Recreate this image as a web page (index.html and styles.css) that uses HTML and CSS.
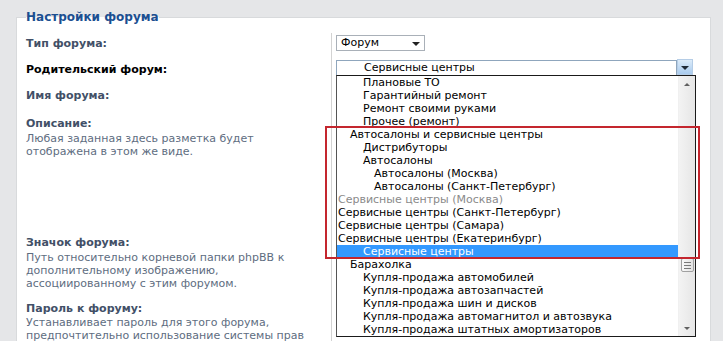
FILE: index.html
```html
<!DOCTYPE html>
<html lang="ru">
<head>
<meta charset="utf-8">
<title>Настройки форума</title>
<link rel="stylesheet" href="styles.css">
</head>
<body>
<fieldset class="panel">
  <legend class="legend">Настройки форума</legend>

  <dl class="row row-short">
    <dt class="term term-short"><span class="label">Тип форума:</span></dt>
    <dd class="field field-type">
      <div class="select select-small"><span class="select-text">Форум</span><span class="caret"></span></div>
    </dd>
  </dl>

  <dl class="row row-short">
    <dt class="term term-short"><span class="label label-active">Родительский форум:</span></dt>
    <dd class="field field-parent">
      <div class="combo">
        <div class="select select-wide"><span class="select-text indent-2">Сервисные центры</span></div>
        <div class="combo-button"><span class="caret caret-dark"></span></div>

        <div class="dropdown">
          <ul class="options">
            <li class="option indent-2">Плановые ТО</li>
            <li class="option indent-2">Гарантийный ремонт</li>
            <li class="option indent-2">Ремонт своими руками</li>
            <li class="option indent-2">Прочее (ремонт)</li>
            <li class="option indent-1">Автосалоны и сервисные центры</li>
            <li class="option indent-2">Дистрибуторы</li>
            <li class="option indent-2">Автосалоны</li>
            <li class="option indent-3">Автосалоны (Москва)</li>
            <li class="option indent-3">Автосалоны (Санкт-Петербург)</li>
            <li class="option indent-0 option-disabled">Сервисные центры (Москва)</li>
            <li class="option indent-0">Сервисные центры (Санкт-Петербург)</li>
            <li class="option indent-0">Сервисные центры (Самара)</li>
            <li class="option indent-0">Сервисные центры (Екатеринбург)</li>
            <li class="option indent-2 option-selected">Сервисные центры</li>
            <li class="option indent-1">Барахолка</li>
            <li class="option indent-2">Купля-продажа автомобилей</li>
            <li class="option indent-2">Купля-продажа автозапчастей</li>
            <li class="option indent-2">Купля-продажа шин и дисков</li>
            <li class="option indent-2">Купля-продажа автомагнитол и автозвука</li>
            <li class="option indent-2">Купля-продажа штатных амортизаторов</li>
          </ul>
          <div class="scrollbar">
            <div class="scroll-btn"><span class="arrow-up"></span></div>
            <div class="scroll-track">
              <div class="scroll-thumb"><span class="grip"></span><span class="grip"></span><span class="grip"></span></div>
            </div>
            <div class="scroll-btn"><span class="arrow-down"></span></div>
          </div>
        </div>
      </div>
    </dd>
  </dl>

  <dl class="row row-short">
    <dt class="term term-short"><span class="label">Имя форума:</span></dt>
    <dd class="field"><div class="input"></div></dd>
  </dl>

  <dl class="row row-desc">
    <dt class="term term-tall">
      <span class="label">Описание:</span>
      <span class="desc">Любая заданная здесь разметка будет отображена в этом же виде.</span>
    </dt>
    <dd class="field"></dd>
  </dl>

  <dl class="row row-icon">
    <dt class="term term-tall">
      <span class="label">Значок форума:</span>
      <span class="desc">Путь относительно корневой папки phpBB к дополнительному изображению, ассоциированному с этим форумом.</span>
    </dt>
    <dd class="field"></dd>
  </dl>

  <dl class="row row-pass">
    <dt class="term term-tall">
      <span class="label">Пароль к форуму:</span>
      <span class="desc">Устанавливает пароль для этого форума, предпочтительно использование системы прав</span>
    </dt>
    <dd class="field"></dd>
  </dl>
</fieldset>

<div class="annotation"></div>
</body>
</html>
```

FILE: styles.css
```css
html, body {
  margin: 0;
  height: 341px;
  overflow: hidden;
}

body {
  box-sizing: border-box;
  padding: 9px 12px 0 16px;
  background: #e5e6e8;
  font-family: "DejaVu Sans", Verdana, sans-serif;
  font-size: 11px;
  color: #000;
  position: relative;
}

.panel {
  margin: 0;
  padding: 8px 0 0 9px;
  border: 1px solid #d8dadc;
  border-bottom: 0;
  background: #fff;
  min-width: 0;
}

.legend {
  padding: 0;
  font-size: 12px;
  line-height: 16px;
  font-weight: bold;
  color: #1b4f91;
}

.row {
  display: flex;
  margin: 0;
}

.row-short { height: 26px; }
.row-desc { height: 119px; }
.row-icon { height: 66px; }
.row-pass { height: 45px; }

.term {
  width: 305px;
  flex: none;
  margin: 0;
  display: flex;
  flex-direction: column;
}

.term-short { padding-top: 4px; }
.term-tall { padding-top: 6px; }

.label {
  font-weight: bold;
  line-height: 14px;
  color: #425067;
}

.label-active { color: #000; }

.desc {
  margin-top: 1px;
  line-height: 13px;
  color: #5e6d7f;
  width: 290px;
}

.row-pass .desc { line-height: 12.5px; }

.field {
  margin: 0;
  flex: 1;
  border-left: 1px solid #d3d3d3;
  padding-left: 4px;
}

.field-type { padding-top: 2px; }
.field-parent { padding-top: 1px; }

.select {
  box-sizing: border-box;
  height: 16px;
  border: 1px solid #a9b0b8;
  background: #fff;
  display: flex;
  align-items: center;
  line-height: 14px;
}

.select-small {
  width: 89px;
  padding-left: 4px;
  justify-content: space-between;
  padding-right: 4px;
}

.caret {
  width: 0;
  height: 0;
  border-left: 4px solid transparent;
  border-right: 4px solid transparent;
  border-top: 4px solid #222;
  margin-top: 1px;
}

.combo {
  position: relative;
  display: flex;
  width: 358px;
}

.select-wide {
  width: 341px;
  border-color: #8fa6bd;
}

.indent-0 { padding-left: 1px; }
.indent-1 { padding-left: 13px; }
.indent-2 { padding-left: 26px; }
.indent-3 { padding-left: 37px; }

.select-wide .indent-2 { padding-left: 27px; }

.combo-button {
  box-sizing: border-box;
  width: 16px;
  height: 16px;
  margin-top: -1px;
  background: linear-gradient(#dcebf9, #a9cbee);
  border: 1px solid #b5cde6;
  display: flex;
  align-items: center;
  justify-content: center;
}

.caret-dark { border-top-color: #1f2a36; }

.input {
  width: 300px;
  height: 16px;
  border: 1px solid #a9b0b8;
}

.dropdown {
  position: absolute;
  left: 0;
  top: 15px;
  width: 360px;
  height: 262px;
  box-sizing: border-box;
  border: 1px solid #1a1a1a;
  border-left-color: #555;
  background: #fff;
  display: flex;
  z-index: 5;
}

.options {
  list-style: none;
  margin: 0;
  padding: 0;
  width: 341px;
  flex: none;
}

.option {
  height: 13px;
  line-height: 13px;
  white-space: nowrap;
  color: #000;
}

.option-disabled { color: #8a8a8a; }

.option-selected {
  background: #3399ff;
  color: #fff;
}

.scrollbar {
  flex: 1;
  display: flex;
  flex-direction: column;
  background: linear-gradient(90deg, #f3f3f3, #e6e6e6);
  border-left: 1px solid #f0f0f0;
}

.scroll-btn {
  height: 16px;
  display: flex;
  align-items: center;
  justify-content: center;
  flex: none;
}

.arrow-up, .arrow-down {
  width: 0;
  height: 0;
  border-left: 3px solid transparent;
  border-right: 3px solid transparent;
}

.arrow-up { border-bottom: 3px solid #606060; }
.arrow-down { border-top: 3px solid #606060; }

.scroll-track {
  flex: 1;
  padding-top: 166px;
}

.scroll-thumb {
  box-sizing: border-box;
  margin: 0 1px 0 2px;
  height: 14px;
  border: 1px solid #a0a0a0;
  border-radius: 2px;
  background: linear-gradient(90deg, #fafafa, #e2e2e2);
  display: flex;
  flex-direction: column;
  justify-content: center;
  align-items: center;
  gap: 2px;
}

.grip {
  display: block;
  width: 7px;
  height: 1px;
  background: #7a7a7a;
}

.annotation {
  position: absolute;
  left: 325px;
  top: 126px;
  width: 375px;
  height: 133px;
  box-sizing: border-box;
  border: 2px solid #c4262e;
  z-index: 10;
  pointer-events: none;
}
```
